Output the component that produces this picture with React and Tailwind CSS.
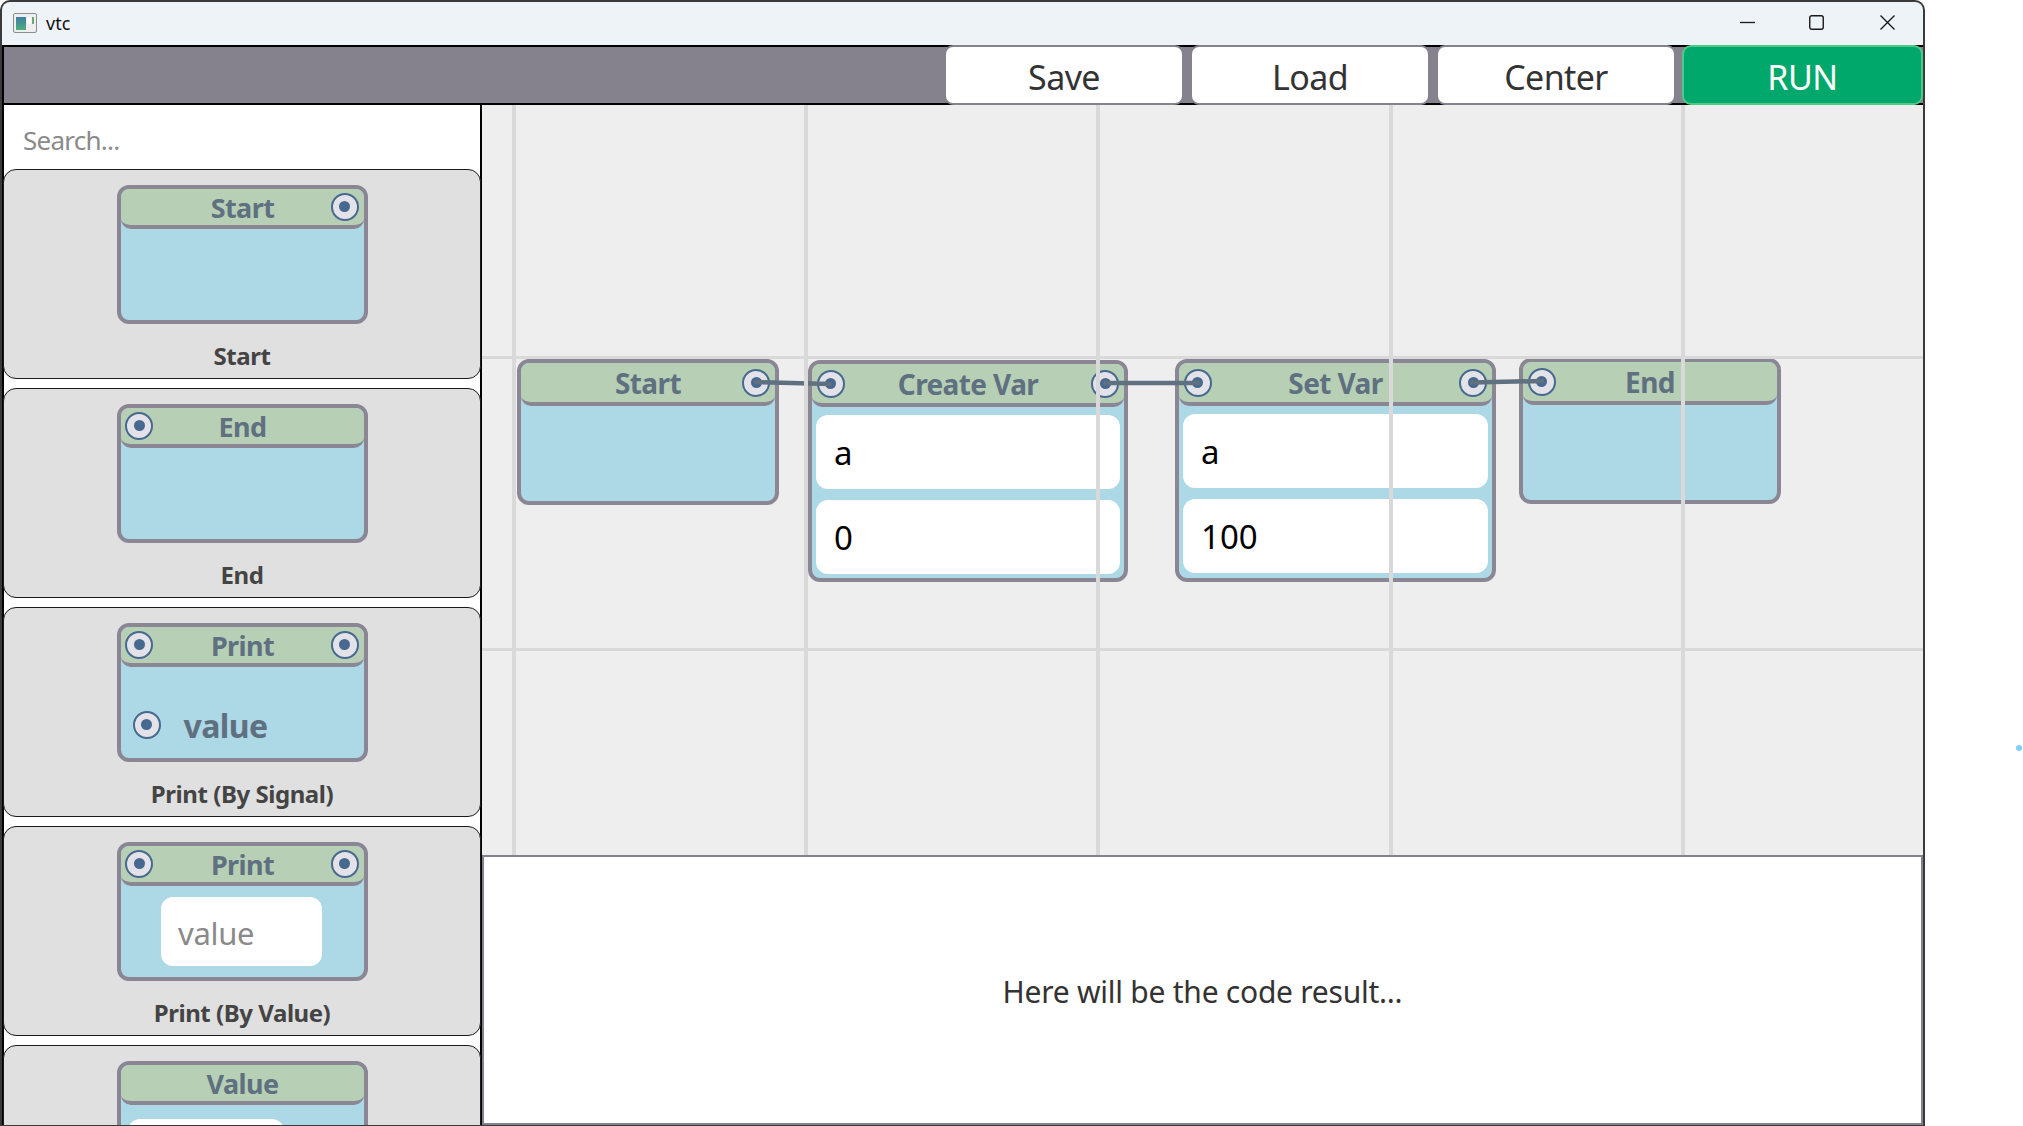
import React from "react";

function Port() {
  return (
    <div className="flex h-[28px] w-[28px] shrink-0 items-center justify-center rounded-full border-2 border-[#47698f] bg-[#e2e2e8]">
      <div className="h-[11px] w-[11px] rounded-full bg-[#47698f]" />
    </div>
  );
}

function Header({ title, left, right, tall }) {
  return (
    <div
      className={
        tall
          ? "grid h-[43px] grid-cols-[37px_1fr_38px] items-center rounded-b-[10px] rounded-t-[8px] border-b-4 border-[#8a8694] bg-[#b7cfb5]"
          : "grid h-[40px] grid-cols-[37px_1fr_38px] items-center rounded-b-[10px] rounded-t-[8px] border-b-4 border-[#8a8694] bg-[#b7cfb5]"
      }
    >
      <div className="flex justify-center">{left && <Port />}</div>
      <div
        className={
          tall
            ? "pl-[1px] text-center text-[28px] font-bold leading-none tracking-[-0.6px] text-[#5f7080]"
            : "pl-[2px] pt-[1px] text-center text-[27px] font-bold leading-none tracking-[-0.6px] text-[#5f7080]"
        }
      >
        {title}
      </div>
      <div className="flex justify-center">{right && <Port />}</div>
    </div>
  );
}

function Field({ text }) {
  return (
    <div className="flex h-[74px] items-center rounded-[12px] bg-white pl-[18px] text-[33px] leading-none text-black">
      {text}
    </div>
  );
}

function PaletteCard({ title, left, right, caption, children }) {
  return (
    <div className="flex h-[210px] shrink-0 flex-col items-center rounded-[13px] border-[1.5px] border-[#1a1a1a] bg-[#e0e0e0] pt-[14.5px]">
      <div className="h-[139px] w-[251px] shrink-0 overflow-hidden rounded-[12px] border-4 border-[#8a8694] bg-[#add8e6]">
        <Header title={title} left={left} right={right} />
        {children}
      </div>
      {caption && (
        <div className="mt-[18px] text-[24px] font-bold leading-[28px] tracking-[-0.45px] text-[#444444]">{caption}</div>
      )}
    </div>
  );
}

function CanvasNode({ className, title, left, right, fields }) {
  return (
    <div className={"absolute overflow-hidden rounded-[12px] border-4 border-[#8a8694] bg-[#add8e6] " + className}>
      <Header title={title} left={left} right={right} tall />
      {fields && (
        <div className="flex flex-col gap-[11px] px-[4px] pt-[8px]">
          {fields.map((f) => (
            <Field key={f} text={f} />
          ))}
        </div>
      )}
    </div>
  );
}

function ToolButton({ children, run }) {
  return (
    <button
      className={
        run
          ? "-my-[2px] h-[60px] w-[241px] rounded-[9px] border-2 border-[#4fc98a] bg-[#00a86b] pt-[3px] text-[34px] leading-none tracking-[-0.4px] text-white"
          : "-my-[2px] h-[60px] w-[240px] rounded-[9px] border-2 border-[#85828e] bg-white pt-[3px] text-[34px] leading-none tracking-[-0.6px] text-[#333333]"
      }
    >
      {children}
    </button>
  );
}

export default function App() {
  return (
    <div className="relative h-[1126px] w-[2023px] overflow-hidden bg-white font-['Noto_Sans',sans-serif]">
      <div className="flex h-full w-[1925px] flex-col rounded-t-[10px] bg-[#3a3a3a] pb-[1px] pl-[2px] pr-[2px] pt-[2px]">
        <div className="flex h-[43px] shrink-0 items-center rounded-t-[8px] bg-[#eef3f8] pb-[2px] pl-[11px]">
          <svg width="24" height="20" viewBox="0 0 24 20">
            <defs>
              <linearGradient id="ic" x1="0" y1="0" x2="0" y2="1">
                <stop offset="0" stopColor="#3f7fa8" />
                <stop offset="1" stopColor="#4fae78" />
              </linearGradient>
            </defs>
            <rect x="0.5" y="0.5" width="23" height="19" rx="1.5" fill="#eeeeee" stroke="#8d8d8d" />
            <rect x="3" y="4" width="10" height="13" fill="url(#ic)" />
            <rect x="14" y="4" width="4" height="7" fill="#ffffff" />
            <rect x="19" y="4" width="2" height="7" fill="#6aa97a" />
          </svg>
          <div className="ml-[9px] text-[18px] leading-none text-[#111111]">vtc</div>
          <div className="ml-auto flex items-center gap-[54px] pr-[28px]">
            <svg width="15" height="15" viewBox="0 0 15 15">
              <path d="M0 7.5H15" stroke="#1a1a1a" strokeWidth="1.3" fill="none" />
            </svg>
            <svg width="15" height="15" viewBox="0 0 15 15">
              <rect x="0.75" y="0.75" width="13.5" height="13.5" rx="2" stroke="#1a1a1a" strokeWidth="1.4" fill="none" />
            </svg>
            <svg className="ml-[2px]" width="15" height="15" viewBox="0 0 15 15">
              <path d="M0.5 0.5L14.5 14.5M14.5 0.5L0.5 14.5" stroke="#1a1a1a" strokeWidth="1.4" fill="none" />
            </svg>
          </div>
        </div>

        <div className="flex h-[60px] shrink-0 items-stretch justify-end gap-[6px] border-y-2 border-l-2 border-y-black border-l-black bg-[#85828e]">
          <ToolButton>Save</ToolButton>
          <ToolButton>Load</ToolButton>
          <ToolButton>Center</ToolButton>
          <ToolButton run>RUN</ToolButton>
        </div>

        <div className="flex min-h-0 flex-1">
          <div className="flex w-[480px] shrink-0 flex-col overflow-hidden bg-white px-[1px] shadow-[inset_2px_0_0_#000,inset_-2px_0_0_#000]">
            <div className="flex h-[64px] shrink-0 items-center pl-[20px] pt-[5px] text-[26px] leading-none tracking-[-0.75px] text-[#8a8a8a]">
              Search...
            </div>
            <div className="flex flex-col gap-[9px]">
              <PaletteCard title="Start" right caption="Start" />
              <PaletteCard title="End" left caption="End" />
              <PaletteCard title="Print" left right caption="Print (By Signal)">
                <div className="flex h-[91px] flex-col justify-end pb-[16px] pl-[12px]">
                  <div className="flex items-center gap-[23px]">
                    <Port />
                    <div className="pt-[2px] text-[32px] font-bold leading-none tracking-[-0.6px] text-[#5f7080]">value</div>
                  </div>
                </div>
              </PaletteCard>
              <PaletteCard title="Print" left right caption="Print (By Value)">
                <div className="flex justify-center pr-[1px] pt-[11px]">
                  <div className="flex h-[69px] w-[161px] items-center rounded-[12px] bg-white pl-[17px] pt-[4px] text-[31px] leading-none tracking-[-0.3px] text-[#8a8a8a]">
                    value
                  </div>
                </div>
              </PaletteCard>
              <PaletteCard title="Value">
                <div className="px-[7px] pt-[14px]">
                  <div className="h-[69px] w-[156px] rounded-[12px] bg-white" />
                </div>
              </PaletteCard>
            </div>
          </div>

          <div className="flex min-w-0 flex-1 flex-col">
            <div className="relative min-h-0 flex-1 overflow-hidden bg-[#eeeeee]">
              <CanvasNode className="left-[35px] top-[254px] h-[146px] w-[262px]" title="Start" right />
              <CanvasNode
                className="left-[326px] top-[255px] h-[222px] w-[320px]"
                title="Create Var"
                left
                right
                fields={["a", "0"]}
              />
              <CanvasNode
                className="left-[693px] top-[254px] h-[223px] w-[321px]"
                title="Set Var"
                left
                right
                fields={["a", "100"]}
              />
              <CanvasNode className="left-[1037px] top-[253px] h-[146px] w-[262px]" title="End" left />

              <svg className="pointer-events-none absolute inset-0 h-full w-full" fill="none">
                <path d="M273.5 277L348 279" stroke="#5f7080" strokeWidth="4.5" strokeLinecap="round" />
                <path d="M623 278H716" stroke="#5f7080" strokeWidth="4.5" strokeLinecap="round" />
                <path d="M990 277.5L1060 276" stroke="#5f7080" strokeWidth="4.5" strokeLinecap="round" />
              </svg>

              <div className="pointer-events-none absolute inset-y-0 left-[30px] w-[4px] bg-[#d9d9d9]" />
              <div className="pointer-events-none absolute inset-y-0 left-[322px] w-[4px] bg-[#d9d9d9]" />
              <div className="pointer-events-none absolute inset-y-0 left-[614px] w-[4px] bg-[#d9d9d9]" />
              <div className="pointer-events-none absolute inset-y-0 left-[907px] w-[4px] bg-[#d9d9d9]" />
              <div className="pointer-events-none absolute inset-y-0 left-[1199px] w-[4px] bg-[#d9d9d9]" />
              <div className="pointer-events-none absolute inset-x-0 top-[251px] h-[3px] bg-[#d9d9d9]" />
              <div className="pointer-events-none absolute inset-x-0 top-[543px] h-[3px] bg-[#d9d9d9]" />
            </div>
            <div className="flex h-[270px] shrink-0 items-center justify-center border-2 border-[#85828e] bg-white pt-[3px] text-[30px] leading-none tracking-[-0.25px] text-[#333333]">
              Here will be the code result...
            </div>
          </div>
        </div>
      </div>
      <div className="absolute left-[2016px] top-[745px] h-[6px] w-[6px] rounded-full bg-[#7fd0ff]" />
    </div>
  );
}
